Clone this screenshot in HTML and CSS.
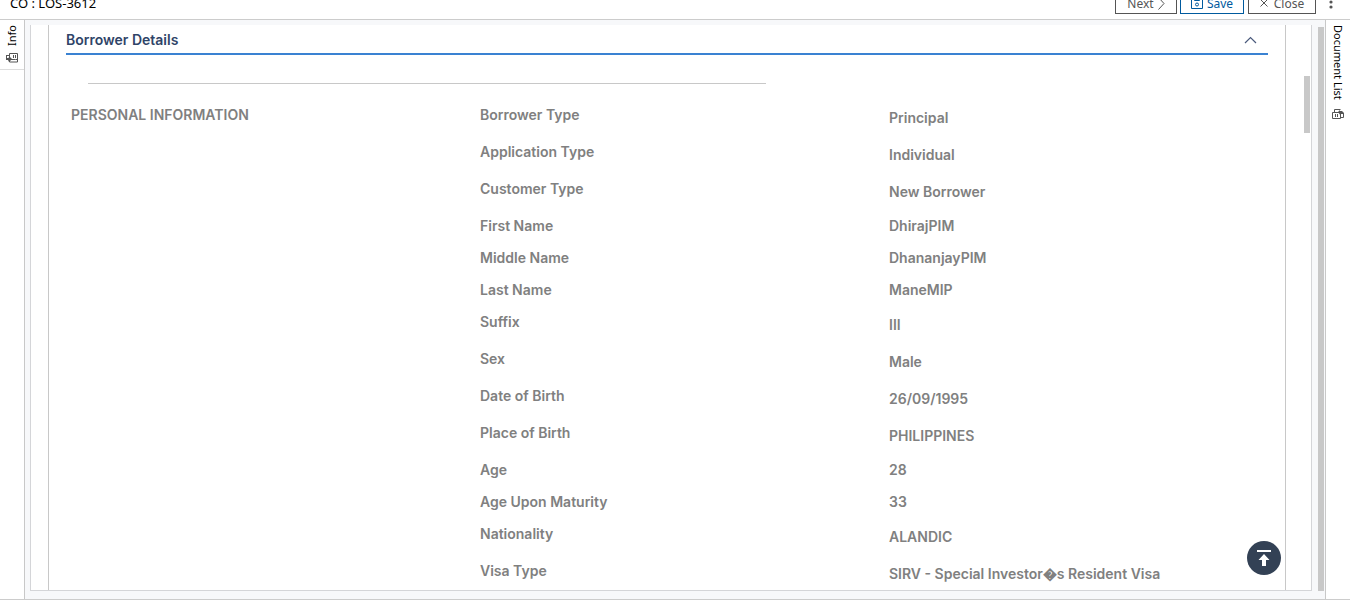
FILE: index.html
```html
<!DOCTYPE html>
<html lang="en">
<head>
<meta charset="utf-8">
<title>CO : LOS-3612</title>
<link rel="stylesheet" href="styles.css">
</head>
<body>
<header class="topbar">
  <h1 class="topbar-title">CO : LOS-3612</h1>
  <div class="actions">
    <button class="btn btn-next" type="button">Next
      <svg width="7" height="14" viewBox="0 0 7 14"><path d="M.5 1.500L6 7.500.5 13.500" fill="none" stroke="currentColor"/></svg>
    </button>
    <button class="btn btn-save" type="button">
      <svg width="12" height="12" viewBox="0 0 12 12"><path d="M.5.5h11v11H.5zM3.5.5v3h5v-3" fill="none" stroke="currentColor"/><circle cx="6" cy="7.500" r="1.500" fill="none" stroke="currentColor"/></svg>
      Save</button>
    <button class="btn btn-close" type="button">
      <svg width="8" height="8" viewBox="0 0 8 8"><path d="M.5.5l7 7M7.5.5l-7 7" fill="none" stroke="currentColor"/></svg>
      Close</button>
    <button class="more" type="button" aria-label="More">
      <svg width="4" height="14" viewBox="0 0 4 14"><g fill="#555"><circle cx="2" cy="2" r="1.6"/><circle cx="2" cy="7" r="1.6"/><circle cx="2" cy="12" r="1.6"/></g></svg>
    </button>
  </div>
</header>
<div class="workspace">
  <aside class="side side-left">
    <button class="side-tab tab-info" type="button">
      <span class="vertical vertical-up">Info</span>
      <svg width="12" height="10" viewBox="0 0 12 10"><path d="M3.500.5h8v8M3.500.5v6h6M7.500 2v3M9.500 2v3M11.500 6.500h-2M3.500 6v3h8V7" fill="none" stroke="#555"/><path d="M0 2h3v1H1v2h1l2-1 2 2-3 3-1-2H0z" fill="#555"/></svg>
    </button>
  </aside>
  <main class="content">
    <div class="panel">
      <section class="sheet">
        <button class="section-head" type="button" aria-expanded="true">
          <span>Borrower Details</span>
          <svg width="13" height="8" viewBox="0 0 13 8"><path d="M1 7l5.500-5.500L12 7" fill="none" stroke="#4a5a7c" stroke-width="1.200"/></svg>
        </button>
        <hr class="rule">
        <div class="details">
          <h2 class="group-title">PERSONAL INFORMATION</h2>
          <dl class="fields">
            <div class="row choice"><dt>Borrower Type</dt><dd>Principal</dd></div>
            <div class="row choice"><dt>Application Type</dt><dd>Individual</dd></div>
            <div class="row choice"><dt>Customer Type</dt><dd>New Borrower</dd></div>
            <div class="row"><dt>First Name</dt><dd>DhirajPIM</dd></div>
            <div class="row"><dt>Middle Name</dt><dd>DhananjayPIM</dd></div>
            <div class="row"><dt>Last Name</dt><dd>ManeMIP</dd></div>
            <div class="row choice"><dt>Suffix</dt><dd>III</dd></div>
            <div class="row choice"><dt>Sex</dt><dd>Male</dd></div>
            <div class="row choice"><dt>Date of Birth</dt><dd>26/09/1995</dd></div>
            <div class="row choice"><dt>Place of Birth</dt><dd>PHILIPPINES</dd></div>
            <div class="row"><dt>Age</dt><dd>28</dd></div>
            <div class="row"><dt>Age Upon Maturity</dt><dd>33</dd></div>
            <div class="row choice"><dt>Nationality</dt><dd>ALANDIC</dd></div>
            <div class="row choice"><dt>Visa Type</dt><dd>SIRV - Special Investor&#xFFFD;s Resident Visa</dd></div>
          </dl>
        </div>
      </section>
      <div class="track"><div class="thumb"></div></div>
      <button class="to-top" type="button" aria-label="Back to top">
        <svg width="34" height="34" viewBox="0 0 34 34"><path d="M10 9h14v2H10zM17 13l5.500 6H19v6h-4v-6h-3.500z" fill="#fff"/></svg>
      </button>
    </div>
    <div class="outer-thumb"></div>
  </main>
  <aside class="side side-right">
    <button class="side-tab tab-docs" type="button">
      <span class="vertical">Document List</span>
      <svg width="12" height="11" viewBox="0 0 12 11"><path d="M.5 3.500h8v6h-8zM3.500 5v3M5.500 5v3M2.500 3V.5h6M8.500 8.500h3v-4" fill="none" stroke="#555"/><path d="M6 3l2-2v1h2l2 2v1H9v2z" fill="#555"/></svg>
    </button>
  </aside>
</div>
</body>
</html>
```
FILE: styles.css
```css
* { box-sizing: border-box; }
body {
  margin: 0;
  height: 100vh;
  padding-bottom: 15px;
  display: flex;
  flex-direction: column;
  overflow: hidden;
  background: #fff;
  font-family: "Noto Sans", "Open Sans", sans-serif;
  font-size: 12px;
}
button {
  font: inherit;
  color: inherit;
  background: none;
  border: 0;
  padding: 0;
  cursor: pointer;
}
svg { display: block; flex: none; }

.topbar {
  flex: none;
  height: 20px;
  display: flex;
  align-items: flex-end;
  justify-content: space-between;
  padding: 0 17px 5px 10px;
  border-bottom: 1px solid #ccc;
  overflow: hidden;
}
.topbar-title {
  margin: 0;
  font-size: 13px;
  font-weight: 400;
  line-height: 22px;
  color: #000;
}
.actions { display: flex; align-items: flex-end; gap: 4px; }
.btn {
  display: flex;
  align-items: center;
  justify-content: center;
  gap: 4px;
  height: 22px;
  border: 1px solid #555;
  color: #555;
}
.btn-next { width: 62px; }
.btn-save { width: 64px; margin-left: -1px; border-color: #005a9e; color: #005a9e; }
.btn-close { width: 68px; gap: 6px; }
.more { margin-left: 9px; padding-bottom: 5px; }

.workspace { flex: 1; min-height: 0; display: flex; border-bottom: 1px solid #ccc; }
.side { flex: none; width: 25px; }
.side-left { border-right: 1px solid #c8c8c8; }
.side-right { border-left: 1px solid #c8c8c8; }
.side-tab {
  display: flex;
  flex-direction: column;
  align-items: center;
  width: 24px;
  padding-top: 5px;
  gap: 9px;
  color: #000;
  font-size: 11px;
  line-height: 16px;
}
.tab-info { height: 50px; gap: 7px; border-bottom: 1px solid #ddd; }
.vertical { writing-mode: vertical-rl; }
.vertical-up { transform: rotate(180deg); }

.content {
  flex: 1;
  min-width: 0;
  display: flex;
  gap: 6px;
  padding: 5px 1px 8px 5px;
  background: #f7f8fa;
}
.panel {
  position: relative;
  flex: 1;
  min-width: 0;
  display: flex;
  background: #fff;
  border: 1px solid #d4d5d8;
  border-top: 0;
  overflow: hidden;
}
.outer-thumb { flex: none; width: 6px; margin-top: 2px; background: #c8c8c8; }
.sheet {
  flex: 1;
  min-width: 0;
  margin-left: 17px;
  padding: 0 17px;
  border: solid #c8c8c8;
  border-width: 0 1px;
}
.track { flex: none; width: 25px; padding-left: 18px; padding-top: 51px; }
.thumb { width: 6px; height: 57px; background: #c8c8c8; }

.section-head {
  display: flex;
  align-items: center;
  justify-content: space-between;
  width: 100%;
  height: 30px;
  padding: 2px 11px 0 0;
  border-bottom: 2px solid #3a82d2;
  color: #2f4468;
  font: 600 14px/20px Inter, sans-serif;
}
.rule {
  width: 678px;
  max-width: 100%;
  height: 1px;
  margin: 28px 0 0 22px;
  border: 0;
  background: #c8c8c8;
}
.details {
  display: grid;
  grid-template-columns: 409fr 788fr;
  margin-top: 21px;
  padding-left: 5px;
  color: #808080;
  font: 600 14px/20px Inter, sans-serif;
}
.group-title { margin: 0; font: inherit; }
.fields { margin: 0; }
.row { display: grid; grid-template-columns: 409fr 379fr; height: 32px; }
.row dd { margin: 0; }
.choice { height: 37px; }
.choice dd { padding-top: 3px; }

.to-top {
  position: absolute;
  right: 30px;
  bottom: 15px;
  border-radius: 50%;
  background: #334155;
}
```
